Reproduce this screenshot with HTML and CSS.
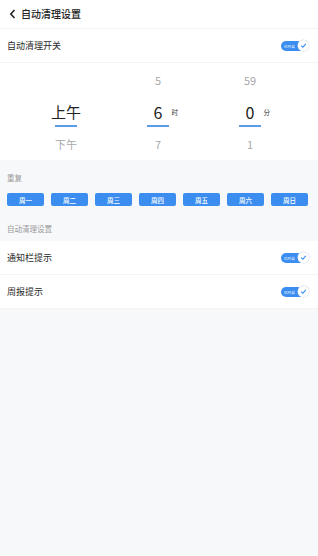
FILE: index.html
```html
<!DOCTYPE html>
<html lang="zh">
<head>
<meta charset="utf-8">
<link rel="stylesheet" href="styles.css">
</head>
<body>
<div class="header">
  <svg class="back" width="7" height="10" viewBox="0 0 7 10"><path d="M5.5 1 L1.8 5 L5.5 9" fill="none" stroke="#222" stroke-width="1.6"/></svg>
  <span class="title">自动清理设置</span>
</div>
<div class="row">
  <span>自动清理开关</span>
  <span class="toggle"><span class="tg-text">已开启</span><span class="knob"><svg width="7" height="7" viewBox="0 0 7 7"><path d="M1.2 3.6 L2.9 5.2 L5.8 1.9" fill="none" stroke="#3b8ef0" stroke-width="1.1"/></svg></span></span>
</div>
<div class="picker">
  <div class="col">
    <div class="item"></div>
    <div class="item sel"><span class="val big">上午</span><span class="bar"></span></div>
    <div class="item dim">下午</div>
  </div>
  <div class="col">
    <div class="item dim">5</div>
    <div class="item sel"><span class="val">6<span class="unit">时</span></span><span class="bar"></span></div>
    <div class="item dim">7</div>
  </div>
  <div class="col">
    <div class="item dim">59</div>
    <div class="item sel"><span class="val">0<span class="unit">分</span></span><span class="bar"></span></div>
    <div class="item dim">1</div>
  </div>
</div>
<div class="section">
  <div class="label">重复</div>
  <div class="days">
    <span class="day">周一</span><span class="day">周二</span><span class="day">周三</span><span class="day">周四</span><span class="day">周五</span><span class="day">周六</span><span class="day">周日</span>
  </div>
  <div class="label label2">自动清理设置</div>
</div>
<div class="row">
  <span>通知栏提示</span>
  <span class="toggle"><span class="tg-text">已开启</span><span class="knob"><svg width="7" height="7" viewBox="0 0 7 7"><path d="M1.2 3.6 L2.9 5.2 L5.8 1.9" fill="none" stroke="#3b8ef0" stroke-width="1.1"/></svg></span></span>
</div>
<div class="row">
  <span>周报提示</span>
  <span class="toggle"><span class="tg-text">已开启</span><span class="knob"><svg width="7" height="7" viewBox="0 0 7 7"><path d="M1.2 3.6 L2.9 5.2 L5.8 1.9" fill="none" stroke="#3b8ef0" stroke-width="1.1"/></svg></span></span>
</div>
</body>
</html>
```
FILE: styles.css
```css
html, body {
  margin: 0;
  padding: 0;
  background: #f7f8fa;
  font-family: "Noto Sans CJK SC", "Noto Sans", sans-serif;
  color: #333;
}
.header {
  height: 29px;
  background: #fff;
  border-bottom: 1px solid #f2f3f5;
  box-sizing: border-box;
  display: flex;
  align-items: center;
  padding-left: 9px;
}
.back { display: block; }
.title {
  margin-left: 5px;
  font-size: 10px;
  font-weight: 500;
  color: #222;
  line-height: 1;
}
.row {
  height: 34px;
  box-sizing: border-box;
  background: #fff;
  border-bottom: 1px solid #f3f4f6;
  display: flex;
  align-items: center;
  justify-content: space-between;
  padding: 0 10px 0 7px;
  font-size: 9px;
  color: #2a2a2a;
}
.toggle {
  position: relative;
  width: 27px;
  height: 10px;
  border-radius: 5px;
  background: #3b8ef0;
  display: flex;
  align-items: center;
}
.tg-text {
  font-size: 4px;
  color: #fff;
  margin-left: 3px;
  line-height: 1;
  transform: scale(0.9);
  transform-origin: left center;
}
.knob {
  position: absolute;
  right: -1px;
  top: -0.5px;
  width: 11px;
  height: 11px;
  border-radius: 50%;
  background: #fff;
  box-shadow: 0 0 0 0.5px #cfd8e3;
  display: flex;
  align-items: center;
  justify-content: center;
}
.knob svg { display: block; }
.picker {
  background: #fff;
  display: flex;
  padding: 1px 22px 0 20px;
  height: 97px;
  box-sizing: border-box;
}
.col {
  flex: 1;
  display: flex;
  flex-direction: column;
  align-items: center;
}
.item {
  height: 32px;
  flex-shrink: 0;
  display: flex;
  align-items: center;
  justify-content: center;
  font-size: 11px;
  color: #a8a8a8;
}
.item.sel {
  flex-direction: column;
  justify-content: flex-start;
  padding-top: 6px;
  box-sizing: border-box;
}
.val {
  position: relative;
  font-size: 16px;
  line-height: 20px;
  color: #222;
}
.val.big { font-size: 15px; }
.unit {
  position: absolute;
  left: 100%;
  top: 0;
  margin-left: 9px;
  font-size: 6.5px;
  color: #333;
}
.bar {
  width: 22px;
  height: 2px;
  background: #5b9be6;
  margin-top: 3px;
}
.section {
  padding: 13px 7px 0 7px;
  height: 81px;
  box-sizing: border-box;
}
.label {
  font-size: 7.5px;
  color: #999;
  line-height: 10px;
}
.days {
  display: flex;
  gap: 7px;
  margin-top: 10px;
}
.day {
  width: 37px;
  height: 13px;
  border-radius: 2px;
  background: #3b8ef0;
  color: #fff;
  font-size: 6.5px;
  font-weight: 500;
  display: flex;
  align-items: center;
  justify-content: center;
}
.label2 { margin-top: 18px; }
```
